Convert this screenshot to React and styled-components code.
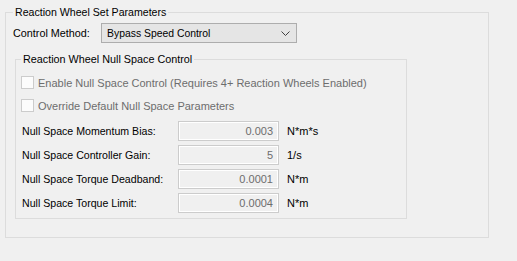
import styled, { createGlobalStyle } from "styled-components";

const Global = createGlobalStyle`
  html, body {
    margin: 0;
    background: #f0f0f0;
  }
  body {
    font-family: "Liberation Sans", Arial, sans-serif;
    font-size: 11px;
    color: #000;
  }
`;

const Page = styled.div`
  width: 517px;
  height: 261px;
  padding: 12px 0 0 5px;
  box-sizing: border-box;
`;

const Group = styled.div`
  position: relative;
  box-sizing: border-box;
  width: ${p => p.$w}px;
  height: ${p => p.$h}px;
  border: 1px solid #dcdcdc;
  padding: ${p => p.$pad};
  display: flex;
  flex-direction: column;
`;

const GroupTitle = styled.span`
  position: absolute;
  top: -8px;
  left: ${p => p.$left}px;
  padding: 0 2px;
  background: #f0f0f0;
  line-height: 15px;
  font-size: ${p => p.$size}px;
  white-space: nowrap;
`;

const ControlRow = styled.div`
  display: flex;
  align-items: center;
  height: 20px;
`;

const Label = styled.span`
  width: ${p => p.$w}px;
  flex-shrink: 0;
  white-space: nowrap;
  font-size: 10.8px;
`;

const Combo = styled.div`
  box-sizing: border-box;
  width: 196px;
  height: 20px;
  border: 1px solid #adadad;
  background: #e5e5e5;
  display: flex;
  align-items: center;
  justify-content: space-between;
  padding: 0 6px 0 5px;
  font-size: 10.4px;
`;

const InnerGroup = styled(Group)`
  margin: 16px 0 0 2px;
`;

const CheckRow = styled.label`
  display: flex;
  align-items: center;
  gap: 4px;
  height: 13px;
  margin-bottom: ${p => p.$mb}px;
  color: #6d6d6d;
  white-space: nowrap;
  font-size: 11px;
`;

const Box = styled.span`
  box-sizing: border-box;
  width: 13px;
  height: 13px;
  border: 1px solid #cccccc;
  background: #fcfcfc;
  flex-shrink: 0;
`;

const Fields = styled.div`
  display: flex;
  flex-direction: column;
  gap: 4px;
  padding-left: 1px;
`;

const FieldRow = styled.div`
  display: flex;
  align-items: center;
  height: 20px;
`;

const FieldLabel = styled(Label)`
  font-size: 10.6px;
`;

const ValueBox = styled.div`
  box-sizing: border-box;
  width: 101px;
  height: 20px;
  border: 1px solid #cccccc;
  box-shadow: inset 0 0 0 1px #ffffff;
  background: #f0f0f0;
  color: #6d6d6d;
  text-align: right;
  padding: 0 5px;
  line-height: 18px;
  font-size: 11px;
`;

const Unit = styled.span`
  margin-left: 8px;
  font-size: 11px;
`;

const fields = [
  { label: "Null Space Momentum Bias:", value: "0.003", unit: "N*m*s" },
  { label: "Null Space Controller Gain:", value: "5", unit: "1/s" },
  { label: "Null Space Torque Deadband:", value: "0.0001", unit: "N*m" },
  { label: "Null Space Torque Limit:", value: "0.0004", unit: "N*m" },
];

const Chevron = () => (
  <svg width="9" height="5" viewBox="0 0 9 5">
    <path d="M0.5 0.5 L4.5 4.5 L8.5 0.5" fill="none" stroke="#404040" strokeWidth="1" />
  </svg>
);

export default function App() {
  return (
    <Page>
      <Global />
      <Group $w={484} $h={226} $pad="10px 0 0 7px">
        <GroupTitle $left={7} $size={10.6}>Reaction Wheel Set Parameters</GroupTitle>
        <ControlRow>
          <Label $w={88}>Control Method:</Label>
          <Combo>
            <span>Bypass Speed Control</span>
            <Chevron />
          </Combo>
        </ControlRow>
        <InnerGroup $w={392} $h={160} $pad="16px 0 0 5px">
          <GroupTitle $left={5} $size={10.8}>Reaction Wheel Null Space Control</GroupTitle>
          <CheckRow $mb={10}>
            <Box />
            Enable Null Space Control (Requires 4+ Reaction Wheels Enabled)
          </CheckRow>
          <CheckRow $mb={9}>
            <Box />
            Override Default Null Space Parameters
          </CheckRow>
          <Fields>
            {fields.map(f => (
              <FieldRow key={f.label}>
                <FieldLabel $w={156}>{f.label}</FieldLabel>
                <ValueBox>{f.value}</ValueBox>
                <Unit>{f.unit}</Unit>
              </FieldRow>
            ))}
          </Fields>
        </InnerGroup>
      </Group>
    </Page>
  );
}
